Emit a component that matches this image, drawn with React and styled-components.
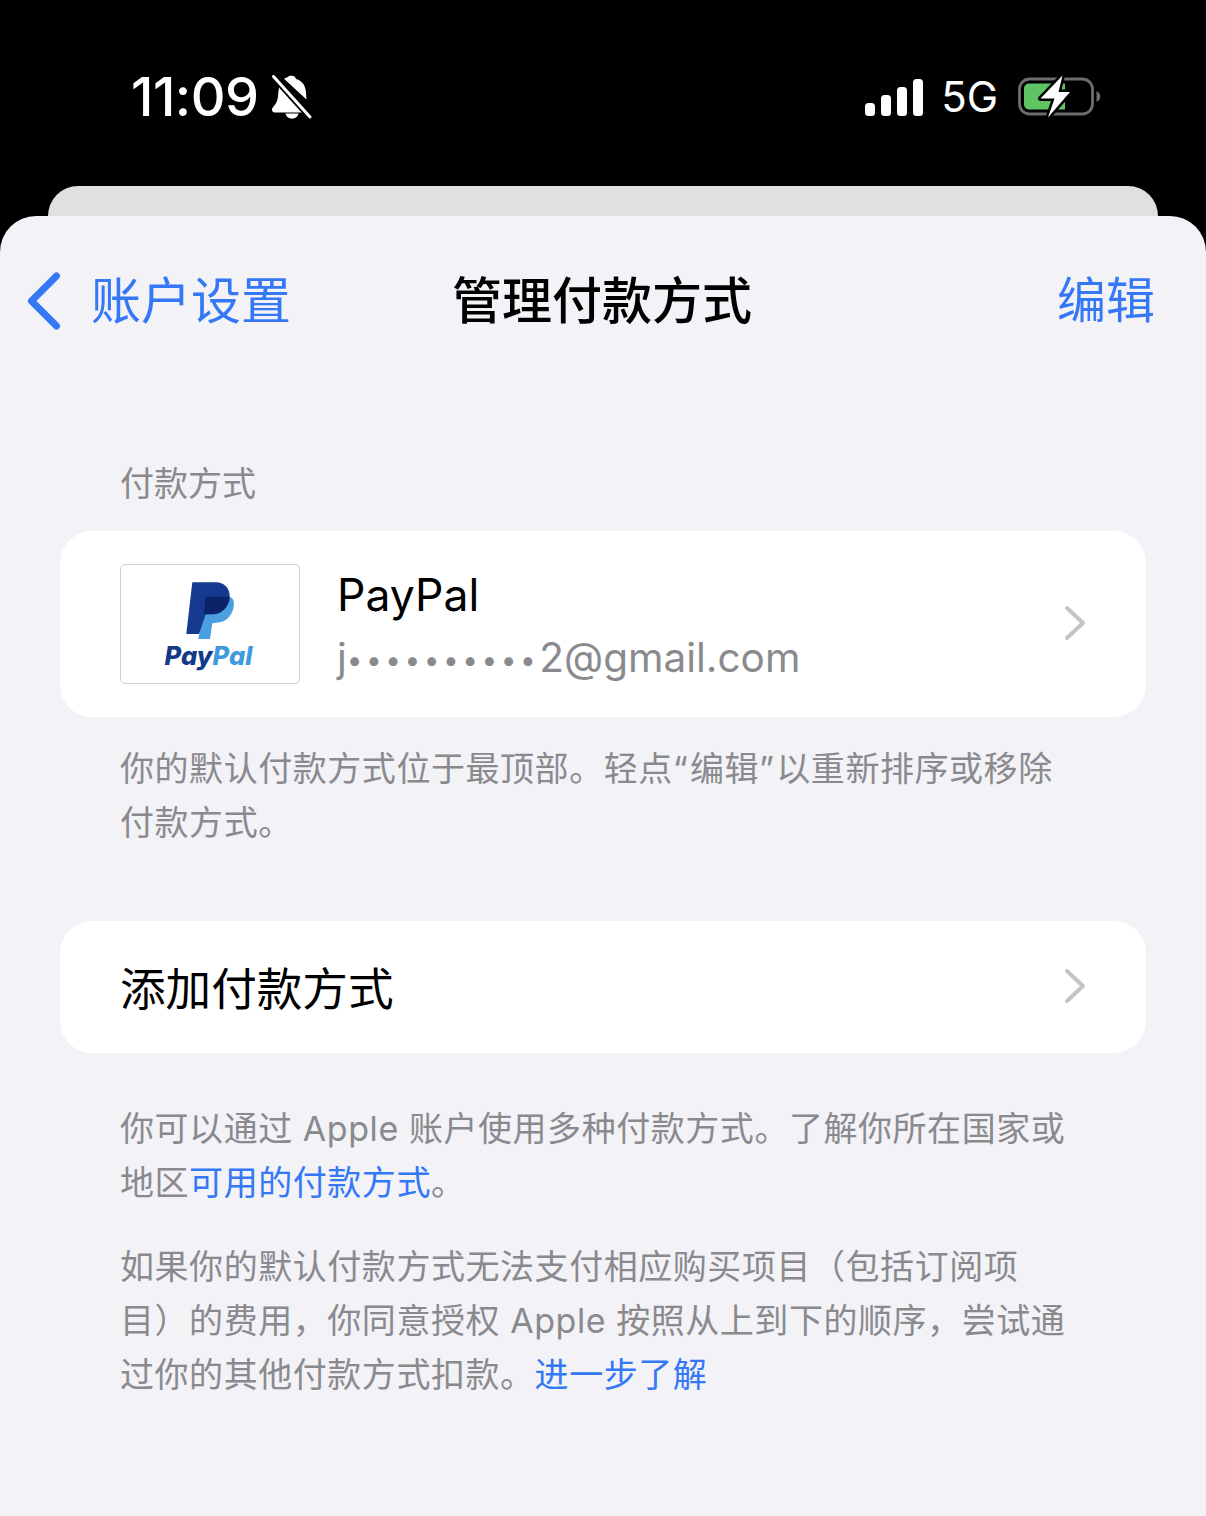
import styled, { createGlobalStyle } from "styled-components";

const FONT = `Inter, "Noto Sans CJK SC", sans-serif`;

const GlobalStyle = createGlobalStyle`
  html, body {
    margin: 0;
    padding: 0;
    background: #000;
  }
  * {
    box-sizing: border-box;
  }
`;

const Phone = styled.div`
  width: 1206px;
  height: 1516px;
  display: flex;
  flex-direction: column;
  overflow: hidden;
  background: #000;
  font-family: ${FONT};
`;

const StatusBar = styled.div`
  height: 186px;
  flex: none;
  display: flex;
  align-items: center;
  justify-content: space-between;
  padding: 40px 104px 32px 131px;
  color: #fff;
`;

const StatusGroup = styled.div`
  display: flex;
  align-items: center;
  gap: ${(p) => p.$gap}px;
`;

const Time = styled.span`
  font-size: 54px;
  font-weight: 500;
  letter-spacing: -0.5px;
  line-height: 60px;
`;

const Network = styled.span`
  margin-left: -2px;
  font-size: 42px;
  font-weight: 400;
  line-height: 50px;
`;

const BackSheet = styled.div`
  height: 30px;
  flex: none;
  margin: 0 48px;
  background: #e0e0e0;
  border-radius: 30px 30px 0 0;
`;

const Sheet = styled.div`
  flex: 1;
  background: #f2f2f7;
  border-radius: 36px 36px 0 0;
`;

const NavBar = styled.div`
  height: 168px;
  display: grid;
  grid-template-columns: 425px auto 1fr;
  align-items: center;
  padding: 2px 51px 0 27px;
`;

const BackLink = styled.div`
  display: flex;
  align-items: center;
  gap: 29px;
  color: #3478f6;
  font-size: 50px;
  line-height: 60px;
`;

const Title = styled.div`
  font-size: 50px;
  font-weight: 500;
  line-height: 60px;
  color: #000;
`;

const EditLink = styled.div`
  justify-self: end;
  color: #3478f6;
  font-size: 49px;
  line-height: 60px;
`;

const Content = styled.div`
  padding: 0 60px;
`;

const SectionLabel = styled.div`
  padding: 78px 0 0 60px;
  font-size: 34px;
  line-height: 44px;
  color: #8a8a8e;
`;

const Card = styled.div`
  display: flex;
  align-items: center;
  height: ${(p) => p.$height}px;
  margin-top: ${(p) => p.$top}px;
  padding: 0 60px;
  background: #fff;
  border-radius: 32px;
`;

const LogoBox = styled.div`
  width: 180px;
  height: 120px;
  flex: none;
  display: flex;
  flex-direction: column;
  align-items: center;
  border: 1.5px solid #cfcfcf;
  border-radius: 5px;
  background: #fff;
  padding-top: 16px;
`;

const LogoWord = styled.div`
  margin: -1px 0 0 -3px;
  font-family: Inter, sans-serif;
  font-size: 25.5px;
  font-weight: 800;
  font-style: italic;
  line-height: 32px;
  color: #123a86;
`;

const LogoWordLight = styled.span`
  color: #3f9bdc;
`;

const MethodText = styled.div`
  margin-left: 37px;
  padding-top: 7px;
  display: flex;
  flex-direction: column;
  gap: 5px;
`;

const MethodName = styled.div`
  font-size: 44.5px;
  line-height: 58px;
  color: #000;
`;

const MethodDetail = styled.div`
  font-size: 40.5px;
  line-height: 58px;
  color: #8a8a8e;
`;

const MaskDots = styled.span`
  font-size: 28px;
  letter-spacing: 3.5px;
  vertical-align: 2px;
`;

const RowLabel = styled.div`
  padding-top: 6px;
  font-size: 45.6px;
  line-height: 60px;
  color: #000;
`;

const Chevron = styled.svg`
  margin: -2px 0 0 auto;
  flex: none;
`;

const Note = styled.p`
  margin: ${(p) => p.$top}px 0 0;
  padding-left: 60px;
  font-size: 34px;
  letter-spacing: 0.55px;
  line-height: 54px;
  color: #8a8a8e;
`;

const NoteLink = styled.span`
  color: #3478f6;
`;

const NoteQuote = styled.span`
  letter-spacing: 2.2px;
`;

function BellSlash() {
  return (
    <svg width="42" height="44" viewBox="0 0 42 44">
      <path
        d="M21 .8c2.200 0 3.700 1.300 4 3.300 6.600 1.700 9.800 7.200 10 14l.5 6.400L13 3.800c1.700-1.200 2-1.100 4-1.900.5-.8 1.800-1.100 4-1.100zM9.500 9.500 33 37.500H4.500C1.800 37.500.2 35.500 1.300 33.200c2.400-3.400 5-5 5.700-11.900.3-4.500.7-8.800 2.500-11.800zM14.500 38.500h13c-.5 3-3.200 5.200-6.500 5.200s-6-2.200-6.500-5.200z"
        fill="#fff"
      />
      <path d="M2.500 1.500 39 42" stroke="#000" strokeWidth="6.500" />
      <path d="M2.500 1.500 39 42" stroke="#fff" strokeWidth="3" strokeLinecap="round" />
    </svg>
  );
}

function SignalBars() {
  return (
    <svg width="58" height="37" viewBox="0 0 58 37">
      <rect x="0" y="24" width="10" height="13" rx="3.500" fill="#fff" />
      <rect x="16" y="16" width="10" height="21" rx="3.500" fill="#fff" />
      <rect x="32" y="8" width="10" height="29" rx="3.500" fill="#fff" />
      <rect x="48" y="0" width="10" height="37" rx="3.500" fill="#fff" />
    </svg>
  );
}

function Battery() {
  return (
    <svg width="84" height="44" viewBox="0 0 84 44">
      <rect x="1.500" y="4" width="73" height="35" rx="10" fill="none" stroke="#6d6d6d" strokeWidth="2.800" />
      <path d="M11 8.500h36v26H11a5 5 0 0 1-5-5v-16a5 5 0 0 1 5-5z" fill="#5ec464" />
      <path d="M78.500 16c2.500 1 3.800 3 3.800 5.500s-1.300 4.500-3.800 5.500z" fill="#6d6d6d" />
      <path
        d="M44.500.5 22.500 23.500h14L30 42.500 52 17H40.500z"
        fill="#fff"
        stroke="#000"
        strokeWidth="5"
        strokeLinejoin="round"
        paintOrder="stroke"
      />
    </svg>
  );
}

function BackChevron() {
  return (
    <svg width="35" height="58" viewBox="0 0 35 58">
      <path
        d="M29.500 4 4.500 29l25 25"
        fill="none"
        stroke="#3478f6"
        strokeWidth="7"
        strokeLinecap="round"
        strokeLinejoin="round"
      />
    </svg>
  );
}

function RowChevron() {
  return (
    <Chevron width="22" height="36" viewBox="0 0 22 36">
      <path
        d="M3 3l16 15L3 33"
        fill="none"
        stroke="#c4c4c7"
        strokeWidth="4"
        strokeLinecap="round"
        strokeLinejoin="round"
      />
    </Chevron>
  );
}

function PayPalMark() {
  return (
    <svg width="50" height="60" viewBox="0 0 50 60">
      <path
        d="M20.700 15.700H43c4.500 0 6.500 3.500 5.800 9-1.200 9.500-7.500 16-15.500 16.800l-6 .8L25 58H13.300l5-27z"
        fill="#4a9fe0"
      />
      <path
        d="M7.300 1.300h23.400C39 1.300 45 7 44.700 15.700c-.5 10-8 17.600-17.700 17.600h-6.300L14 53H1.300z"
        fill="#153a8f"
      />
      <path d="M20.700 15.700h24c-.5 10-8 17.600-17.700 17.600h-8.500z" fill="#0b2468" />
    </svg>
  );
}

export default function App() {
  return (
    <Phone>
      <GlobalStyle />
      <StatusBar>
        <StatusGroup $gap={12}>
          <Time>11:09</Time>
          <BellSlash />
        </StatusGroup>
        <StatusGroup $gap={20}>
          <SignalBars />
          <Network>5G</Network>
          <Battery />
        </StatusGroup>
      </StatusBar>
      <BackSheet />
      <Sheet>
        <NavBar>
          <BackLink>
            <BackChevron />
            账户设置
          </BackLink>
          <Title>管理付款方式</Title>
          <EditLink>编辑</EditLink>
        </NavBar>
        <Content>
          <SectionLabel>付款方式</SectionLabel>
          <Card $height={186} $top={25}>
            <LogoBox>
              <PayPalMark />
              <LogoWord>
                Pay<LogoWordLight>Pal</LogoWordLight>
              </LogoWord>
            </LogoBox>
            <MethodText>
              <MethodName>PayPal</MethodName>
              <MethodDetail>
                j<MaskDots>••••••••••</MaskDots>2@gmail.com
              </MethodDetail>
            </MethodText>
            <RowChevron />
          </Card>
          <Note $top={25}>
            你的默认付款方式位于最顶部。轻点<NoteQuote>“</NoteQuote>编辑<NoteQuote>”</NoteQuote>以重新排序或移除
            <br />
            付款方式。
          </Note>
          <Card $height={132} $top={71}>
            <RowLabel>添加付款方式</RowLabel>
            <RowChevron />
          </Card>
          <Note $top={49}>
            你可以通过 Apple 账户使用多种付款方式。了解你所在国家或
            <br />
            地区<NoteLink>可用的付款方式</NoteLink>。
          </Note>
          <Note $top={30}>
            如果你的默认付款方式无法支付相应购买项目（包括订阅项
            <br />
            目）的费用，你同意授权 Apple 按照从上到下的顺序，尝试通
            <br />
            过你的其他付款方式扣款。<NoteLink>进一步了解</NoteLink>
          </Note>
        </Content>
      </Sheet>
    </Phone>
  );
}
